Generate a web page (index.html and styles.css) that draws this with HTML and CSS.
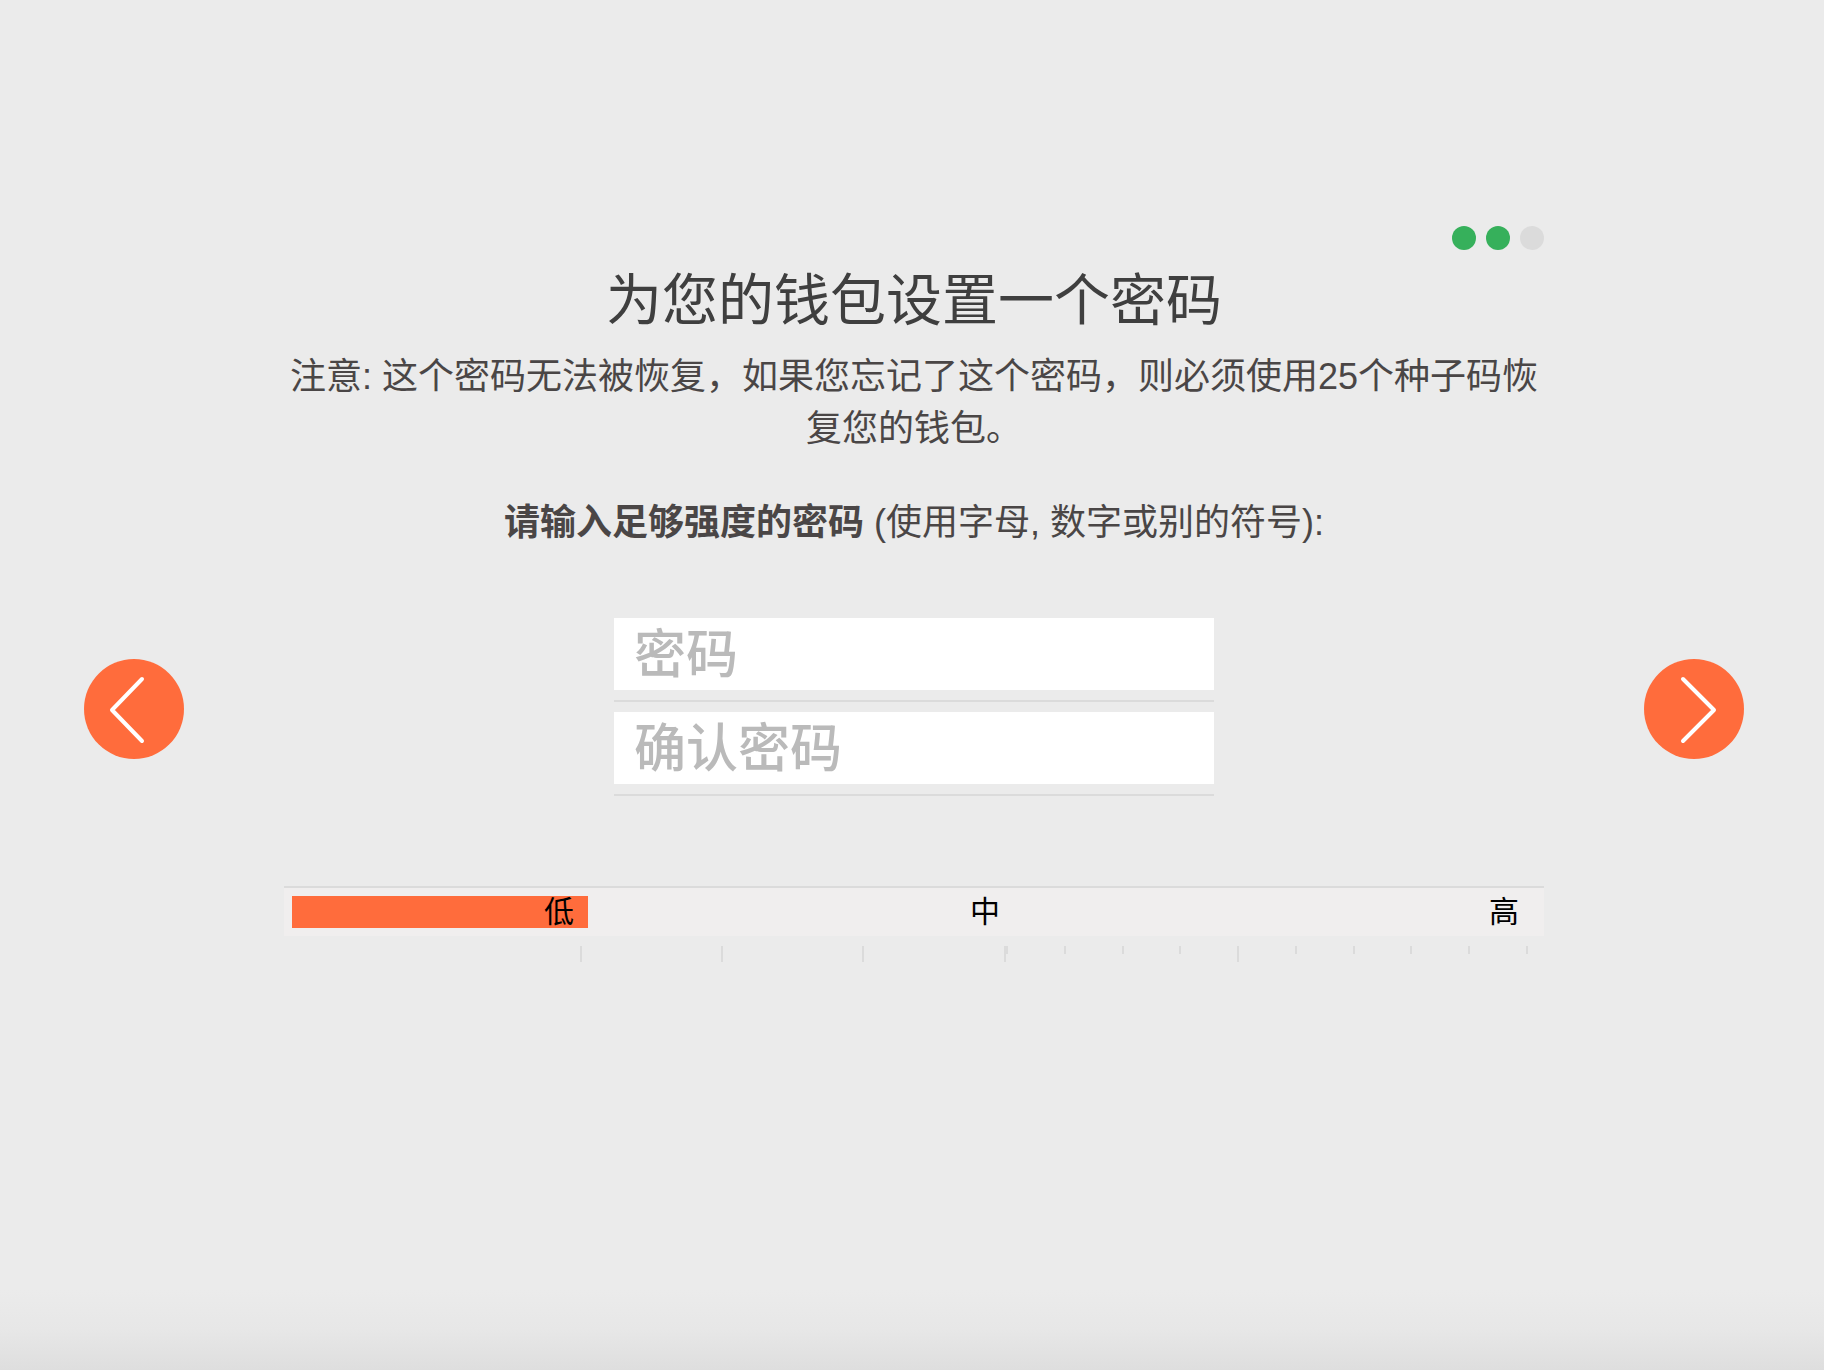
FILE: index.html
```html
<!DOCTYPE html>
<html lang="zh-CN">
<head>
<meta charset="utf-8">
<meta name="viewport" content="width=device-width, initial-scale=1">
<title>为您的钱包设置一个密码</title>
<link rel="stylesheet" href="styles.css">
</head>
<body>
<form class="wizard">
  <button class="nav" type="button" aria-label="返回">
    <svg viewBox="0 0 100 100" aria-hidden="true"><path d="M58 20 28 51 58 82"/></svg>
  </button>
  <main class="page">
    <div class="steps">
      <span class="dot done"></span>
      <span class="dot done"></span>
      <span class="dot"></span>
    </div>
    <h1 class="title">为您的钱包设置一个密码</h1>
    <p class="text">注意: 这个密码无法被恢复，如果您忘记了这个密码，则必须使用25个种子码恢复您的钱包。</p>
    <p class="text prompt"><strong>请输入足够强度的密码</strong> (使用字母, 数字或别的符号):</p>
    <div class="fields">
      <div class="field"><input class="input" type="password" placeholder="密码" aria-label="密码"></div>
      <div class="field"><input class="input" type="password" placeholder="确认密码" aria-label="确认密码"></div>
    </div>
    <div class="meter">
      <span class="level active">低</span>
      <span class="level">中</span>
      <span class="level last">高</span>
    </div>
    <svg class="scale" viewBox="0 0 1260 16" preserveAspectRatio="none" aria-hidden="true">
      <path d="M297 0v16M438 0v16M579 0v16M721 0v16M723 0v8M781 0v8M839 0v8M896 0v8M954 0v16M1012 0v8M1070 0v8M1127 0v8M1185 0v8M1243 0v8"/>
    </svg>
  </main>
  <button class="nav" type="button" aria-label="继续">
    <svg viewBox="0 0 100 100" aria-hidden="true"><path d="M39 20 70 51 39 82"/></svg>
  </button>
</form>
</body>
</html>
```
FILE: styles.css
```css
* {
  box-sizing: border-box;
}

body {
  margin: 0;
  min-height: 100vh;
  background: linear-gradient(to top, #dedede, #e7e7e7 40px, #ebebeb 80px);
  color: #4a4646;
  font-family: "Liberation Sans", "Noto Sans CJK SC", sans-serif;
}

.wizard {
  display: grid;
  grid-template-columns: 100px minmax(0, 1fr) 100px;
  column-gap: 100px;
  align-items: start;
  padding: 226px 80px 80px 84px;
}

.nav {
  width: 100px;
  height: 100px;
  margin-top: 433px;
  padding: 0;
  border: 0;
  border-radius: 50%;
  background: #ff6c3c;
  cursor: pointer;
}

.nav svg {
  display: block;
  fill: none;
  stroke: #fff;
  stroke-width: 4;
  stroke-linecap: round;
  stroke-linejoin: round;
}

.steps {
  display: flex;
  justify-content: flex-end;
  gap: 10px;
}

.dot {
  width: 24px;
  height: 24px;
  border-radius: 50%;
  background: #dbdbdb;
}

.done {
  background: #36b05b;
}

.title {
  margin: 9px 0 8px;
  color: #3f3f3f;
  font-size: 56px;
  font-weight: 400;
  line-height: 84px;
  text-align: center;
}

.text {
  margin: 0;
  font-size: 36px;
  line-height: 52px;
  text-align: center;
}

.prompt {
  margin-top: 42px;
}

.fields {
  display: grid;
  gap: 10px;
  width: 600px;
  max-width: 100%;
  margin: 69px auto 90px;
}

.field {
  padding-bottom: 10px;
  border-bottom: 2px solid #dbdbdb;
}

.input {
  display: block;
  width: 100%;
  height: 72px;
  padding: 2px 20px 0;
  border: 0;
  outline: 0;
  background: #fff;
  color: #3f3f3f;
  font-family: inherit;
  font-size: 52px;
  font-weight: 500;
}

.input::placeholder {
  color: #bababa;
  opacity: 1;
}

.meter {
  display: grid;
  grid-template-columns: 296fr 426fr 522fr;
  padding: 8px;
  border-top: 2px solid #dbdbdb;
  background: #f0eeee;
  color: #000;
}

.level {
  padding-right: 14px;
  font-size: 30px;
  line-height: 32px;
  text-align: right;
}

.active {
  background: #ff6c3c;
}

.last {
  padding-right: 17px;
}

.scale {
  display: block;
  width: 100%;
  height: 16px;
  margin-top: 10px;
  fill: none;
  stroke: #dbdbdb;
  stroke-width: 2;
}
```
